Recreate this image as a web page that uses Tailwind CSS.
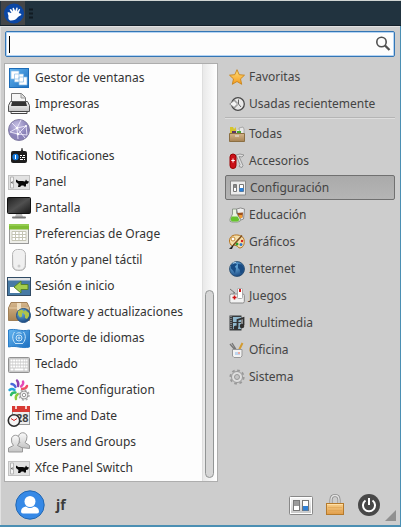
<!DOCTYPE html>
<html lang="es">
<head>
<meta charset="utf-8">
<meta name="viewport" content="width=device-width, initial-scale=1">
<title>Menú de aplicaciones</title>
<script src="https://cdn.jsdelivr.net/npm/@tailwindcss/browser@4"></script>
</head>
<body class="flex min-h-screen flex-col bg-[#4b8fb3] font-['Noto_Sans',sans-serif] text-xs text-[#333]">
<svg class="absolute size-0" aria-hidden="true">
  <defs>
    <linearGradient id="blue" x1="0" y1="0" x2="1" y2="1"><stop stop-color="#64b5f0"/><stop offset="1" stop-color="#1c6fc0"/></linearGradient>
    <linearGradient id="pale" x1="0" y1="0" x2="0" y2="1"><stop stop-color="#fafafa"/><stop offset="1" stop-color="#c4c4c4"/></linearGradient>
    <linearGradient id="dark" x1="0" y1="0" x2="1" y2="1"><stop stop-color="#222"/><stop offset=".5" stop-color="#505050"/><stop offset="1" stop-color="#171717"/></linearGradient>
    <linearGradient id="box" x1="0" y1="0" x2="0" y2="1"><stop stop-color="#d5b68c"/><stop offset="1" stop-color="#a88353"/></linearGradient>
    <linearGradient id="gold" x1="0" y1="0" x2="0" y2="1"><stop stop-color="#ffe07a"/><stop offset="1" stop-color="#f59a1c"/></linearGradient>
    <linearGradient id="brass" x1="0" y1="0" x2="0" y2="1"><stop stop-color="#f8d08c"/><stop offset="1" stop-color="#e09c48"/></linearGradient>
    <radialGradient id="violet" cx=".4" cy=".3"><stop stop-color="#c6c0e4"/><stop offset="1" stop-color="#8a82b8"/></radialGradient>
    <radialGradient id="sea" cx=".35" cy=".3" r=".8"><stop stop-color="#6fb4e4"/><stop offset="1" stop-color="#123f78"/></radialGradient>
    <g id="xfce"><rect x="1.500" y="5.500" width="21" height="14" fill="#e2e2e2" stroke="#c2c2c2"/><path d="M3.500 7h3v11h-3z" fill="#f5f5f5" stroke="#b5b5b5"/><path d="M4 12.500l1.500-1.500v3z" fill="#444"/><path d="M9 9.500l2.500 1.500h4l2.500.5 1-2 1 1.500 2 .5-1 2-2 .5v2.500h-2l-.5-1h-2l-1.500 1.500H11l.5-3L9 12z" fill="#080808"/></g>
    <g id="switches"><rect x=".5" y="3.500" width="23" height="18" rx="1" fill="url(#pale)" stroke="#888"/><rect x="1.500" y="4.500" width="21" height="16" fill="none" stroke="#fff"/><rect x="4.500" y="7.500" width="6" height="10" fill="#fff" stroke="#777"/><path d="M5 8h5v5H5z" fill="#999"/><rect x="13.500" y="7.500" width="6" height="10" fill="#fff" stroke="#777"/><path d="M14 13h5v4.500h-5z" fill="#2f80d5"/></g>
  </defs>
</svg>

<header class="flex h-[26px] shrink-0 items-center gap-1 border-t border-b border-t-[#d0d5d3] border-b-[#14202a] bg-[#21333f] pl-px">
  <button type="button" aria-label="Abrir menú" class="grid size-6 place-items-center bg-[#444648]">
    <svg class="size-6" viewBox="0 0 24 24"><circle cx="13" cy="12.500" r="10" fill="#0b47a5"/><path d="M6.500 11.500c2-1 3 .5 4 .5L8.500 8.500 10 8l2 2.500L11.500 7l1.300-.2 1.400 3.200 1.300-3.500 1.200.3-.5 4 2-3 1 .7-1.500 3.500c2 .5 3 1 2.500 2-1 1-2.500 1-3.200 2-1.500 2.500-4 3.500-7 3.500C7.500 19.500 7 17 7.500 15z" fill="#fff"/></svg>
  </button>
  <svg class="h-3 w-1" viewBox="0 0 4 12"><path d="M0 2.500h4M0 6.500h4M0 10.500h4" stroke="#111b22" stroke-width="2"/></svg>
</header>

<main class="mr-px mb-[2px] flex grow flex-col border-t border-l border-[#e2e2e2] bg-[#cdcdcd] px-1 pt-1">
  <label class="mr-px flex h-[26px] items-center rounded-[2px] border border-[#3476b5] bg-[#fdfdfd] px-[3px] shadow-[inset_0_0_0_1px_#b5d5f5]">
    <span class="h-[17px] w-px bg-black"></span>
    <input type="text" aria-label="Buscar" class="min-w-0 grow bg-transparent outline-none">
    <svg class="size-4" viewBox="0 0 16 16" fill="none" stroke="#505050"><circle cx="6.500" cy="6" r="4.700" stroke-width="1.600"/><path d="M10 9.500l4.500 4.500" stroke-width="2.300"/></svg>
  </label>

  <div class="mt-[6px] flex gap-[7px]">
    <section aria-label="Aplicaciones" class="-ml-px flex w-[214px] shrink-0 border border-[#adadad] bg-[#fdfdfd]">
      <ul class="grow pt-px *:h-[26px] [&_button]:flex [&_button]:h-full [&_button]:w-full [&_button]:items-center [&_button]:gap-1 [&_button]:pl-[2px] [&_button]:whitespace-nowrap [&_svg]:size-6 [&_svg]:shrink-0">
        <li><button type="button"><svg viewBox="0 0 24 24"><rect x="2.500" y="2.500" width="19" height="19" fill="url(#blue)" stroke="#1d6cb8"/><g fill="#fff" stroke="#8abce5" stroke-width=".7"><path d="M4 5h8v8H4zM7.500 8h9v8h-9zM12 11h8v8h-8z"/></g></svg>Gestor de ventanas</button></li>
        <li><button type="button"><svg viewBox="0 0 24 24"><path d="M4.500 11V1.500h10l4 4V11" fill="#f6f6f6" stroke="#777"/><path d="M14 1.500V6h4.500" fill="#ddd" stroke="#999"/><path d="M3.500 9.500h17l2 4v6h-21v-6z" fill="url(#pale)" stroke="#555"/><path d="M5 10h14l1 4H4z" fill="#333"/><path d="M4 19.500h16v2H4z" fill="#f8f8f8" stroke="#444"/></svg>Impresoras</button></li>
        <li><button type="button"><svg viewBox="0 0 24 24"><circle cx="12" cy="12" r="10.500" fill="url(#violet)" stroke="#8580a5"/><path d="M5 5l5 5 9-2M10 10l-7 4M10 10l1 11M11 16l8-8M3 14l8 2 9 1M10 10L18 20M10 10l4-8M19 8l1 9" fill="none" stroke="#eeeafa" stroke-width=".9"/><g fill="#fff"><circle cx="10" cy="10" r="1.300"/><circle cx="19" cy="8" r="1"/><circle cx="11" cy="16" r="1.300"/></g></svg>Network</button></li>
        <li><button type="button"><svg viewBox="0 0 24 24"><path d="M15 4v4" stroke="#222"/><rect x="4" y="7" width="16" height="12" rx="2" fill="#1d1d1d"/><path d="M13 8l2-3 2 3z" fill="#222"/><circle cx="8.500" cy="13" r="3.200" fill="#1479dc"/><path d="M8.500 11v4" stroke="#fff"/><path d="M13 11.500h2m1 0h2m-5 2h1m1 0h3m-5 2h3m1 0h1" stroke="#fff"/></svg>Notificaciones</button></li>
        <li><button type="button"><svg viewBox="0 0 24 24"><use href="#xfce"/></svg>Panel</button></li>
        <li><button type="button"><svg viewBox="0 0 24 24"><rect x=".5" y="1.500" width="23" height="16" rx="1" fill="url(#dark)" stroke="#111"/><path d="M9 18h6l1 3H8z" fill="#bbb"/><path d="M6 21.500h12" stroke="#777" stroke-width="2" stroke-linecap="round"/></svg>Pantalla</button></li>
        <li><button type="button"><svg viewBox="0 0 24 24"><rect x="2.500" y="2.500" width="19" height="19" fill="#eeeee9" stroke="#999"/><path d="M2 2h20v5.500H2z" fill="#7ebc34"/><path d="M2 3h20" stroke="#a6db68"/><path d="M5 9.500h14v9H5zM5 12.500h14M5 15.500h14M8.500 9.500v9M12 9.500v9M15.500 9.500v9" fill="#fff" stroke="#c4c4b4"/></svg>Preferencias de Orage</button></li>
        <li><button type="button"><svg viewBox="0 0 24 24"><rect x="5.500" y="1.500" width="13" height="21" rx="5" fill="url(#pale)" stroke="#b5b5b5"/><rect x="6.500" y="2.500" width="11" height="19" rx="4.500" fill="#f0f0f0"/><circle cx="12" cy="18" r="1.500" fill="#ccc"/></svg>Ratón y panel táctil</button></li>
        <li><button type="button"><svg viewBox="0 0 24 24"><rect x=".5" y="3.500" width="23" height="18" fill="#477aa5" stroke="#304b65"/><path d="M1 4h22v2.500H1z" fill="#e0e3e5"/><path d="M3 13h10v6H3z" fill="#fff"/><path d="M7 13l7-6v3.500h7v5h-7V19z" fill="#a4cd4c" stroke="#55842b"/></svg>Sesión e inicio</button></li>
        <li><button type="button"><svg viewBox="0 0 24 24"><path d="M1.500 8L4 2.500h16L22.500 8v12.500h-21z" fill="url(#box)" stroke="#a18058"/><path d="M2 8h20" stroke="#e8d0aa"/><path d="M10 3h4v7h-4z" fill="#efdfc2"/><circle cx="16.500" cy="15.500" r="7" fill="url(#sea)" stroke="#285585"/><path d="M11 11l4-1.500 2 2-2 2v3l-2 1-2-3zM18 10l4 3v3l-2 3-2-1v-3l-2-2z" fill="#b0c448"/></svg>Software y actualizaciones</button></li>
        <li><button type="button"><svg viewBox="0 0 24 24"><path d="M1.500 4c7-2 12 2 21 0v17c-8 2-13-2-21 0z" fill="url(#blue)" stroke="#2c7ec8"/><g fill="none" stroke="#c7e5fa"><circle cx="12" cy="12" r="3"/><circle cx="12" cy="12" r="1"/><path d="M7.500 6c-3 4-2 9 1.500 12M16.500 6c3 4 2 9-1.500 12M9 17.500h6M9.500 7.500c2-1 3-1 5 0"/></g></svg>Soporte de idiomas</button></li>
        <li><button type="button"><svg viewBox="0 0 24 24"><rect x="1.500" y="5.500" width="21" height="15" rx="1" fill="#c9c9c9" stroke="#929292"/><path d="M3.500 8.500h17M3.500 11.500h17M3.500 14.500h17" stroke="#fff" stroke-width="2" stroke-dasharray="2 .6"/><path d="M3.500 17.500h3m1 0h9m1 0h3" stroke="#fff" stroke-width="2"/></svg>Teclado</button></li>
        <li><button type="button"><svg viewBox="0 0 24 24"><g fill="none" stroke-width="2.400" stroke-linecap="round"><path d="M11 8Q12 5 10 2.500" stroke="#8a3faf"/><path d="M14 8.500Q17 6 16 3.500" stroke="#e548b5"/><path d="M15 11q4 0 5-3" stroke="#f04e65"/><path d="M8.500 9Q7 6 4.500 6" stroke="#4968da"/><path d="M7.500 12Q5 10 2.500 12" stroke="#26a5d9"/><path d="M8.500 14.500Q5 14 4 17" stroke="#2dbb68"/><path d="M11 16q-3 2-2 5" stroke="#8dcc3c"/></g><circle cx="17" cy="17" r="4" fill="#eee" stroke="#999" stroke-width="1"/><circle cx="17" cy="17" r="5" fill="none" stroke="#aaa" stroke-width="1.500" stroke-dasharray="2 1.900"/><circle cx="17" cy="17" r="1.700" fill="#fff" stroke="#999"/></svg>Theme Configuration</button></li>
        <li><button type="button"><svg viewBox="0 0 24 24"><rect x="5.500" y="2.500" width="17" height="18" fill="#eee" stroke="#999"/><path d="M5 2h18v6H5z" fill="#d83a34"/><path d="M9 1v4M19 1v4" stroke="#fff" stroke-width="1.500"/><text x="9" y="18" font-size="11" font-weight="bold" fill="#444">28</text><circle cx="7" cy="16.500" r="5.700" fill="#f6f6f6" stroke="#2c2c2c" stroke-width="1.600"/><path d="M4 14.500l3 2 3-2" fill="none" stroke="#c22"/></svg>Time and Date</button></li>
        <li><button type="button"><svg viewBox="0 0 24 24" fill="url(#pale)" stroke="#999"><path d="M10 17v-3l3-1.500q-2-2-1.500-6c.5-5 8-5 8.500 0q0 4-2 6l4.500 3v3z"/><path d="M1.500 22v-4l5-2.500Q4 13 4.500 9C5 4 12 4 12.500 9q0 4-2 6.500l5 2.500v4z"/></svg>Users and Groups</button></li>
        <li><button type="button"><svg viewBox="0 0 24 24"><use href="#xfce"/></svg>Xfce Panel Switch</button></li>
      </ul>
      <div class="flex w-[15px] flex-col justify-end border-l border-[#dedede] bg-linear-to-r from-[#e9e9e9] to-white pl-[2px]" aria-hidden="true">
        <div class="mb-[3px] h-[45%] w-[9px] rounded-full border border-[#929595] bg-[#d6d6d6]"></div>
      </div>
    </section>

    <nav aria-label="Categorías" class="mr-px min-w-0 grow text-[#444] [&_button]:flex [&_button]:h-[27px] [&_button]:w-full [&_button]:items-center [&_button]:gap-1 [&_button]:pl-1 [&_button]:whitespace-nowrap [&_svg]:size-4 [&_svg]:shrink-0">
      <button type="button"><svg viewBox="0 0 16 16"><path d="M8 .7l2.200 5 5.300.5-4 3.700 1.200 5.400L8 12.500l-4.700 2.800 1.200-5.400-4-3.700 5.300-.5z" fill="url(#gold)" stroke="#c8851c" stroke-width=".9"/></svg>Favoritas</button>
      <button type="button"><svg viewBox="0 0 16 16"><circle cx="9" cy="8" r="6.300" fill="#e8e8e8" stroke="#484848" stroke-width="1.300"/><path d="M9.500 3.500V8l2.500 3" fill="none" stroke="#666"/><path d="M6 5.200V3.800L.7 8 6 12.200V10h2V6H6z" fill="#f5f5f5" stroke="#777" stroke-width=".8"/></svg>Usadas recientemente</button>
      <hr class="mb-px border-t border-b border-t-[#b5b5b5] border-b-[#dedede]">
      <button type="button"><svg viewBox="0 0 16 16"><path d="M1 1h3l1 2 2-2v7H1z" fill="#d6c52d"/><path d="M3 5h4v3H3z" fill="#5c3566"/><path d="M8 4h3v4H8z" fill="#eee"/><path d="M10 2l4-1 1 2v5h-4z" fill="#e8e8e8" stroke="#888" stroke-width=".6"/><path d="M8 5h4v2H8z" fill="#4aa52e"/><path d="M.5 7.500h15v8H.5z" fill="url(#box)" stroke="#8b6f43"/><path d="M6 10h4" stroke="#eee"/></svg>Todas</button>
      <button type="button"><svg viewBox="0 0 16 16"><path d="M7 2q4-2 8 0l-2 2-3-.5 4 9-1 2-3-1 1-2z" fill="#ddd" stroke="#888" stroke-width=".8"/><rect x="1" y="1" width="6" height="14.500" rx="3" fill="#cb1018" stroke="#900"/><path d="M4 5.500v4M2.300 7.500h3.500" stroke="#fff"/></svg>Accesorios</button>
      <button type="button" aria-current="true" class="my-px !h-[25px] rounded-[2px] border border-[#707070] bg-linear-to-b from-[#aaa] to-[#b5b5b5]"><svg viewBox="0 0 16 16"><path d="M.5 1h15v14H.5z" fill="#ececec" stroke="#888"/><path d="M3.500 4.500h3v7h-3z" fill="#fff" stroke="#777"/><path d="M4 5h2v3H4z" fill="#888"/><path d="M9.500 4.500h4v7h-4z" fill="#fff" stroke="#777"/><path d="M9.500 8h4v3.500h-4z" fill="#2c80d8"/></svg>Configuración</button>
      <button type="button"><svg viewBox="0 0 16 16"><path d="M7.500 2q4-2 8 0l-1 10-4 1.500z" fill="#eee" stroke="#777" stroke-width=".8"/><path d="M8 6l6-.5-.5 5-4 2z" fill="#9c511d"/><path d="M10 8h3v3h-3z" fill="#f29c32"/><path d="M3.500 2h4v4l4 6.500q0 2.500-3 2.500H3q-3 0-2-3l2.500-5z" fill="#e8f3df" stroke="#7b857a" stroke-width=".8"/><path d="M2.500 9.500h6l2 3.500-2 1.500H3L1.500 13z" fill="#65c22d"/></svg>Educación</button>
      <button type="button"><svg viewBox="0 0 16 16"><path d="M4 1.500c4-1.500 10 0 11 4 1 5-1 8-4 8.500-2 0-2-2-4-2.500s-3 1-5-.5C-.5 8 0 3 4 1.500z" fill="#f5dfaa" stroke="#b77520"/><circle cx="4" cy="5" r="2" fill="#fff" stroke="#c58a36"/><circle cx="8" cy="10" r="1.500" fill="#2ba52c"/><circle cx="12" cy="10.500" r="1.500" fill="#3779c8"/><circle cx="13" cy="7" r="1.200" fill="#d62020"/><path d="M13 1.500L4.500 11" stroke="#805020" stroke-width="1.600"/><path d="M5.500 9.500L3 15H0z" fill="#222"/></svg>Gráficos</button>
      <button type="button"><svg viewBox="0 0 16 16"><circle cx="8" cy="8" r="7.500" fill="url(#sea)" stroke="#25496c" stroke-width=".8"/><path d="M2 4l4-2 2 1.500L6 5.500l1 2-1 5-2-3-2-2zM9 3l4 .5 2 4-2 5-2-1V9L9 7z" fill="#184b83"/><path d="M4 2l3-.5" stroke="#b3d5ec"/></svg>Internet</button>
      <button type="button"><svg viewBox="0 0 16 16"><path d="M1 1l5 4H4" fill="none" stroke="#777"/><rect x=".8" y="6" width="14.500" height="9" rx="1.500" fill="#f2f2f2" stroke="#888"/><rect x="8.500" y=".5" width="5" height="10" rx="1" fill="#fff" stroke="#999" stroke-width=".8"/><path d="M10 1h2v3h-2z" fill="#d31616"/><path d="M5.500 7.500v4M3.500 9.500h4" stroke="#ce1414" stroke-width="1.500"/></svg>Juegos</button>
      <button type="button"><svg viewBox="0 0 16 16"><path d="M.5.500h12v15H.5z" fill="#393c3e"/><path d="M4 2h8v5H4zM4 8h8v6H4z" fill="#91b9ce"/><path d="M2 1v14" stroke="#bbb" stroke-dasharray="1 1"/><path d="M8.500 12V5l6-2V10" fill="none" stroke="#303030" stroke-width="1.800"/><circle cx="7" cy="12.800" r="2.300" fill="#303030"/><circle cx="13" cy="11" r="2.300" fill="#303030"/></svg>Multimedia</button>
      <button type="button"><svg viewBox="0 0 16 16"><path d="M1 2l6 7M3 1l5 8" stroke="#777" stroke-width="1.400"/><path d="M13.500 1L9 10" stroke="#d39b30" stroke-width="2"/><path d="M3.500 7.500h9.500V14l-1.500 1.500H5L3.500 14z" fill="#f3f3f3" stroke="#999"/><path d="M6 10h5v3H6z" fill="#bed4ec"/><path d="M9 10h2v2H9z" fill="#ecaaa0"/></svg>Oficina</button>
      <button type="button"><svg viewBox="0 0 16 16" fill="none" stroke="#999"><circle cx="8" cy="8" r="6.700" stroke-width="1.800" stroke-dasharray="2.700 2.560"/><circle cx="8" cy="8" r="5.500" fill="#dedede"/><circle cx="8" cy="8" r="2.500" fill="#c5c5c5"/></svg>Sistema</button>
    </nav>
  </div>

  <footer class="flex h-[43px] items-center pt-[3px] pl-[10px]">
    <svg class="size-[30px]" viewBox="0 0 30 30" aria-hidden="true"><circle cx="15" cy="15" r="14.200" fill="#3689e6" stroke="#2368b2"/><circle cx="15" cy="11.500" r="5.500" fill="#fff"/><path d="M6 21.500q0-4 5-5 4 3 8 0 5 1 5 5 0 2-2 2H8q-2 0-2-2z" fill="#fff"/></svg>
    <span class="ml-[11px] text-sm font-bold text-[#3b3b3b]">jf</span>
    <div class="ml-auto flex items-center gap-[10px] [&_svg]:size-6">
      <button type="button" aria-label="Configuración"><svg viewBox="0 0 24 24"><use href="#switches"/></svg></button>
      <button type="button" aria-label="Bloquear pantalla"><svg viewBox="0 0 24 24"><path d="M8 11V7q0-4.500 4-4.500T16 7v4" fill="none" stroke="#888" stroke-width="3"/><path d="M8 11V7q0-4.500 4-4.500T16 7v4" fill="none" stroke="#e2e2e2" stroke-width="1.400"/><rect x="3.500" y="10.500" width="17" height="11" fill="url(#brass)" stroke="#b57a2c"/><path d="M4 11.500h16" stroke="#ffdfa5"/><path d="M5 14.500h14M5 17.500h14" stroke="#d99d4c" stroke-opacity=".5"/></svg></button>
      <button type="button" aria-label="Salir"><svg viewBox="0 0 24 24"><circle cx="12" cy="12" r="11" fill="#484848"/><path d="M8.500 7.500a6 6 0 1 0 7 0M12 5v7" fill="none" stroke="#fff" stroke-width="2"/></svg></button>
    </div>
    <svg class="mb-1 ml-1 size-[11px] self-end" viewBox="0 0 11 11" aria-hidden="true"><path d="M11 0v11H0z" fill="#909090"/></svg>
  </footer>
</main>
</body>
</html>
